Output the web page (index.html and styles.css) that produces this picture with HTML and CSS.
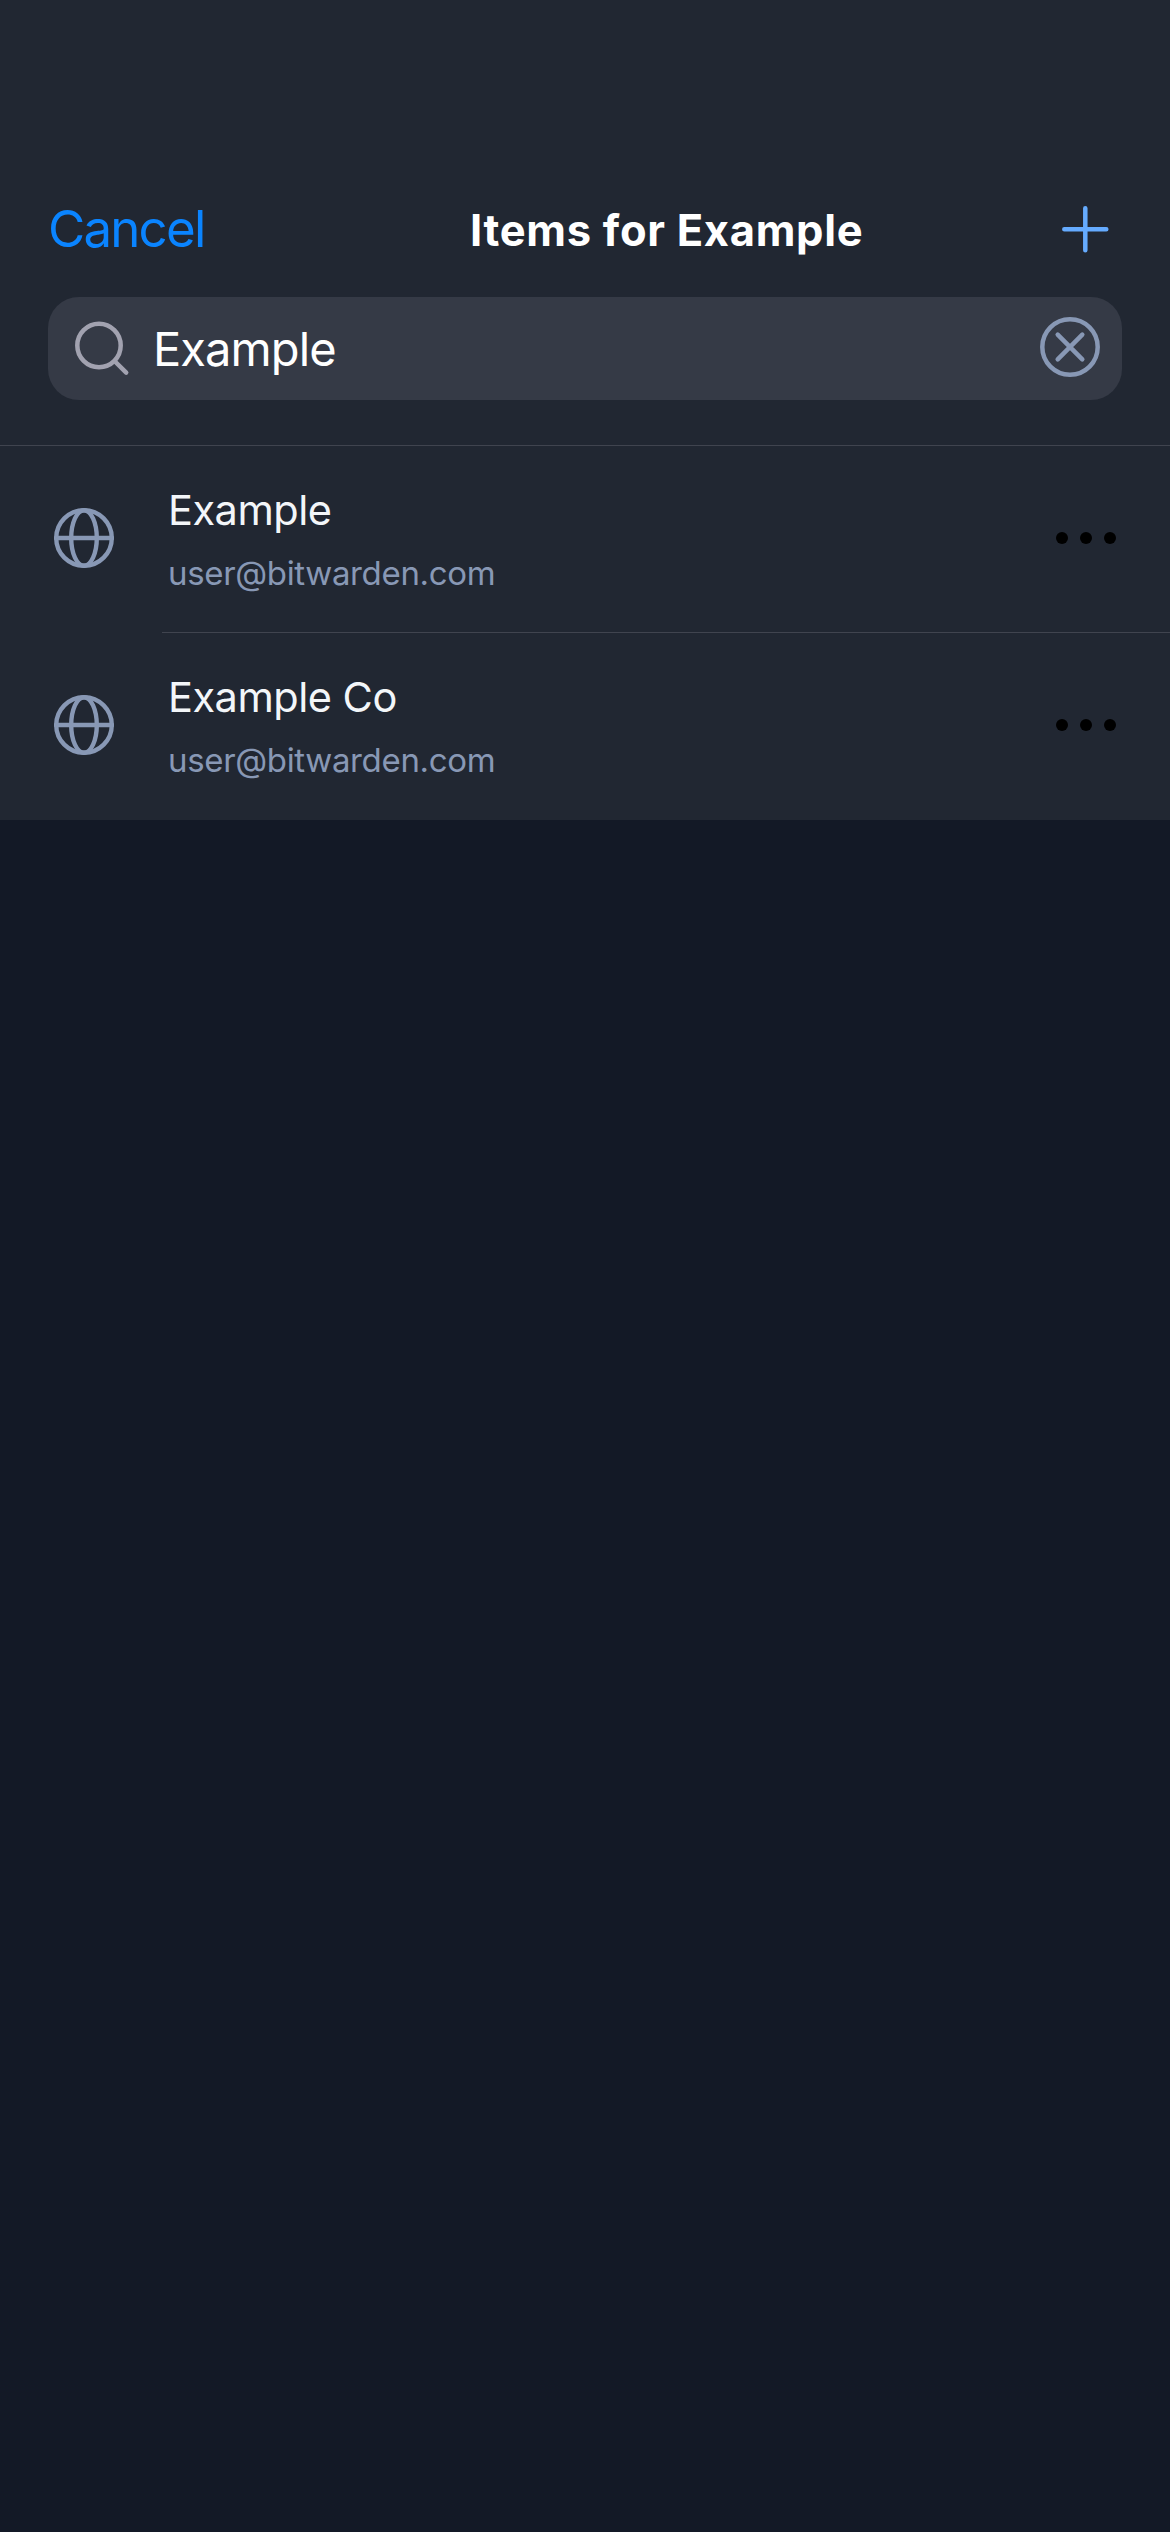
FILE: index.html
```html
<!DOCTYPE html>
<html lang="en">
<head>
<meta charset="utf-8">
<title>Items for Example</title>
<link rel="stylesheet" href="styles.css">
</head>
<body>
<header class="header">
  <nav class="navbar">
    <span class="cancel">Cancel</span>
    <h1 class="title">Items for Example</h1>
    <svg class="plus" width="48" height="48" viewBox="0 0 48 48"><path d="M24.3 3.3v42M3.3 24.3h42"/></svg>
  </nav>
  <div class="search">
    <svg class="search-icon" width="60" height="60" viewBox="0 0 60 60"><circle cx="27" cy="26.5" r="21.7"/><path d="M43 42.5l11.2 11.2"/></svg>
    <span class="query">Example</span>
    <svg class="clear" width="60" height="60" viewBox="0 0 60 60"><circle cx="30" cy="30" r="27.7"/><path d="M17.7 17.7l24.6 24.6M42.3 17.7l-24.6 24.6"/></svg>
  </div>
</header>
<main class="list">
  <div class="row">
    <svg class="globe" width="60" height="60" viewBox="0 0 60 60"><circle cx="30" cy="30" r="27.8"/><ellipse cx="30" cy="30" rx="12.8" ry="27.8"/><path d="M2 30h56"/></svg>
    <div class="body">
      <div class="text"><div class="name">Example</div><div class="email">user@bitwarden.com</div></div>
      <svg class="more" width="60" height="12" viewBox="0 0 60 12"><circle cx="6" cy="6" r="6"/><circle cx="30" cy="6" r="6"/><circle cx="54" cy="6" r="6"/></svg>
    </div>
  </div>
  <div class="row">
    <svg class="globe" width="60" height="60" viewBox="0 0 60 60"><circle cx="30" cy="30" r="27.8"/><ellipse cx="30" cy="30" rx="12.8" ry="27.8"/><path d="M2 30h56"/></svg>
    <div class="body">
      <div class="text"><div class="name">Example Co</div><div class="email">user@bitwarden.com</div></div>
      <svg class="more" width="60" height="12" viewBox="0 0 60 12"><circle cx="6" cy="6" r="6"/><circle cx="30" cy="6" r="6"/><circle cx="54" cy="6" r="6"/></svg>
    </div>
  </div>
</main>
</body>
</html>
```
FILE: styles.css
```css
* { box-sizing: border-box; }
body {
  margin: 0;
  min-height: 2532px;
  background: #131926;
  color: #f3f6f9;
  font-family: Inter, "Liberation Sans", sans-serif;
  white-space: nowrap;
}
svg { display: block; flex: none; fill: none; stroke-width: 4.5; stroke-linecap: round; }
.header {
  height: 446px;
  padding: 180px 48px 0;
  background: #212732;
  border-bottom: 1px solid #40444f;
}
.navbar { display: flex; align-items: center; height: 97px; }
.cancel { width: 422px; color: #0a84ff; font-size: 51px; line-height: 60px; letter-spacing: -1.8px; }
.title { margin: 2px 0 0; color: #fff; font-size: 43.5px; line-height: 60px; font-weight: 700; letter-spacing: 0.7px; }
.plus { margin: 1px 13px 0 auto; stroke: #65abff; }
.search {
  display: flex;
  align-items: center;
  height: 103px;
  margin-top: 20px;
  padding: 0 22px 0 24px;
  border-radius: 31px;
  background: #353a46;
}
.search-icon { stroke: #a2a2b0; }
.query { flex: 1; margin-left: 21px; color: #fff; font-size: 47px; line-height: 60px; letter-spacing: -0.9px; }
.clear { margin-top: -3px; stroke: #8898b5; }
.list { background: #212732; }
.row { display: flex; height: 187px; padding-left: 54px; align-items: stretch; }
.globe { margin-top: 62px; stroke: #8898b5; stroke-width: 4.4; }
.body {
  display: flex;
  flex: 1;
  justify-content: space-between;
  margin-left: 48px;
  padding: 0 54px 0 6px;
  border-bottom: 1px solid #40444f;
}
.row:last-child .body { border-bottom: 0; }
.text { padding-top: 38px; }
.name { font-size: 41.5px; line-height: 52px; letter-spacing: -0.5px; }
.email { margin-top: 11px; color: #8898b5; font-size: 33px; line-height: 52px; letter-spacing: -0.34px; }
.more { margin-top: 86px; fill: #000; }
```
